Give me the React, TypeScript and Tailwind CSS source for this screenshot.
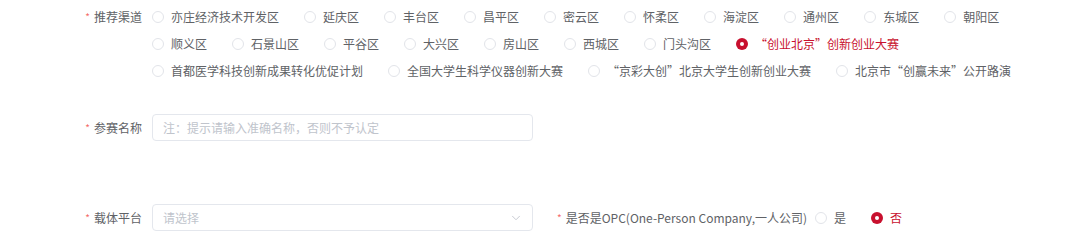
import { ChevronDown } from 'lucide-react';

const channels = [
  '亦庄经济技术开发区',
  '延庆区',
  '丰台区',
  '昌平区',
  '密云区',
  '怀柔区',
  '海淀区',
  '通州区',
  '东城区',
  '朝阳区',
  '顺义区',
  '石景山区',
  '平谷区',
  '大兴区',
  '房山区',
  '西城区',
  '门头沟区',
  '“创业北京”创新创业大赛',
  '首都医学科技创新成果转化优促计划',
  '全国大学生科学仪器创新大赛',
  '“京彩大创”北京大学生创新创业大赛',
  '北京市“创赢未来”公开路演',
];

const selectedChannel = '“创业北京”创新创业大赛';

function Radio({ label, checked }: { label: string; checked?: boolean }) {
  return (
    <label className="flex h-[27px] items-center mr-[25px] cursor-pointer">
      {checked ? (
        <span className="flex h-[12px] w-[12px] items-center justify-center rounded-full bg-[#c8102e]">
          <span className="h-[4px] w-[4px] rounded-full bg-white" />
        </span>
      ) : (
        <span className="h-[12px] w-[12px] rounded-full border border-[#e2e4e9] bg-white" />
      )}
      <span className={`ml-[7px] text-[12px] leading-none ${checked ? 'text-[#c8102e]' : 'text-[#606266]'}`}>
        {label}
      </span>
    </label>
  );
}

function Label({ text }: { text: string }) {
  return (
    <div className="flex w-[152px] shrink-0 items-center justify-end pr-[10px] text-[12px] text-[#606266]">
      <span className="mr-[4px] text-[10px] text-[#f56c6c]">*</span>
      {text}
    </div>
  );
}

export default function App() {
  return (
    <div
      className="h-[242px] w-[1080px] overflow-hidden bg-white pt-[3px]"
      style={{ fontFamily: '"Noto Sans CJK SC", "Noto Sans", sans-serif' }}
    >
      {/* 推荐渠道 */}
      <div className="flex items-start">
        <div className="flex h-[27px] items-center">
          <Label text="推荐渠道" />
        </div>
        <div className="flex w-[900px] flex-wrap">
          {channels.map((c) => (
            <Radio key={c} label={c} checked={c === selectedChannel} />
          ))}
        </div>
      </div>

      {/* 参赛名称 */}
      <div className="mt-[30px] flex items-center">
        <Label text="参赛名称" />
        <input
          className="h-[27px] w-[381px] rounded-[4px] border border-[#e4e7ed] px-[10px] text-[12px] text-[#606266] outline-none placeholder:text-[#c0c4cc]"
          placeholder="注：提示请输入准确名称，否则不予认定"
        />
      </div>

      {/* 载体平台 / OPC */}
      <div className="mt-[63px] flex items-center">
        <Label text="载体平台" />
        <div className="flex h-[27px] w-[381px] items-center justify-between rounded-[4px] border border-[#e4e7ed] pl-[10px] pr-[9px]">
          <span className="text-[12px] text-[#c0c4cc]">请选择</span>
          <ChevronDown size={14} strokeWidth={1.5} className="text-[#c0c4cc]" />
        </div>
        <div className="ml-[24px] flex items-center">
          <div className="flex items-center pr-[8px] text-[12px] text-[#606266]">
            <span className="mr-[4px] text-[10px] text-[#f56c6c]">*</span>
            是否是OPC(One-Person Company,一人公司)
          </div>
          <Radio label="是" />
          <Radio label="否" checked />
        </div>
      </div>
    </div>
  );
}
